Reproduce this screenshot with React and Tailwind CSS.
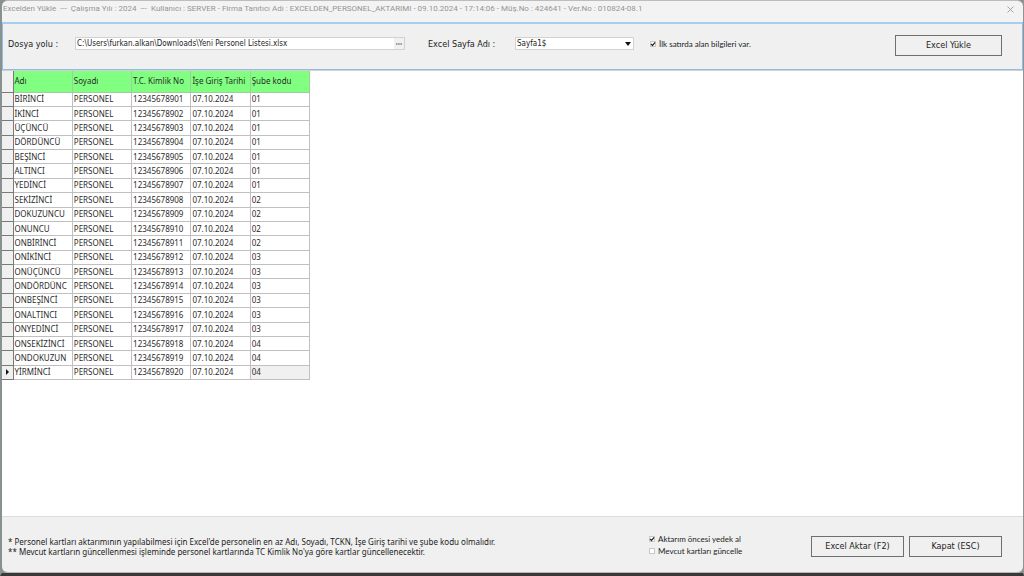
import React, { useState } from "react";

const columns = ["Adı", "Soyadı", "T.C. Kimlik No", "İşe Giriş Tarihi", "Şube kodu"];

const people = [
  ["BİRİNCİ", "01"],
  ["İKİNCİ", "01"],
  ["ÜÇÜNCÜ", "01"],
  ["DÖRDÜNCÜ", "01"],
  ["BEŞİNCİ", "01"],
  ["ALTINCI", "01"],
  ["YEDİNCİ", "01"],
  ["SEKİZİNCİ", "02"],
  ["DOKUZUNCU", "02"],
  ["ONUNCU", "02"],
  ["ONBİRİNCİ", "02"],
  ["ONİKİNCİ", "03"],
  ["ONÜÇÜNCÜ", "03"],
  ["ONDÖRDÜNC", "03"],
  ["ONBEŞİNCİ", "03"],
  ["ONALTINCI", "03"],
  ["ONYEDİNCİ", "03"],
  ["ONSEKİZİNCİ", "04"],
  ["ONDOKUZUN", "04"],
  ["YİRMİNCİ", "04"],
];

const rows = people.map(([name, branch], i) => [
  name,
  "PERSONEL",
  String(12345678901 + i),
  "07.10.2024",
  branch,
]);

const CheckBox = ({ id, label, checked, onChange }) => (
  <div className="flex items-center gap-[3px]">
    <span className="relative flex">
      <input
        id={id}
        type="checkbox"
        checked={checked}
        onChange={(e) => onChange(e.target.checked)}
        className="size-[6px] appearance-none border border-[#c8c8c8] bg-white"
      />
      {checked && (
        <svg
          viewBox="0 0 8 8"
          className="pointer-events-none absolute inset-0 size-[6px]"
          fill="none"
          stroke="#222"
          strokeWidth="1.6"
        >
          <path d="M1.4 3.8 L3.3 6 L6.8 1.8" />
        </svg>
      )}
    </span>
    <label
      htmlFor={id}
      className="font-['Lato',sans-serif] text-[8px] leading-3 whitespace-nowrap"
    >
      {label}
    </label>
  </div>
);

const Button = ({ className, children }) => (
  <button
    type="button"
    className={`h-[21px] border border-[#6f6f6f] bg-[#f0f0f0] text-[9px] leading-3 hover:bg-[#e5f1fb] ${className}`}
  >
    {children}
  </button>
);

const TitleBar = () => (
  <header className="flex h-[22px] items-center justify-between rounded-t-md border-t border-[#bdbdbd] bg-[#f3f3f3] pr-[9px] pb-[5px] pl-px text-[8px] text-[#959595]">
    <h1 className="font-['Roboto',sans-serif] whitespace-pre">
      {
        "Excelden Yükle  ---  Çalışma Yılı : 2024  ---  Kullanıcı : SERVER - Firma Tanıtıcı Adı : EXCELDEN_PERSONEL_AKTARIMI - 09.10.2024 - 17:14:06 - Müş.No : 424641 - Ver.No : 010824-08.1"
      }
    </h1>
    <button type="button" aria-label="Kapat">
      <svg viewBox="0 0 7 7" className="size-[7px]" stroke="#9b9b9b" strokeWidth="0.9">
        <path d="M0.5 0.5 L6.5 6.5 M6.5 0.5 L0.5 6.5" />
      </svg>
    </button>
  </header>
);

const FilePanel = () => {
  const [path, setPath] = useState(
    "C:\\Users\\furkan.alkan\\Downloads\\Yeni Personel Listesi.xlsx"
  );
  const [hasHeader, setHasHeader] = useState(true);

  return (
    <section className="flex h-[48px] items-center border border-t-2 border-[#93bde0] border-t-[#a9cdec] bg-[#f0f0f0] pr-5 pb-[3px] pl-[5px]">
      <label htmlFor="path" className="w-[67px] text-[9px]">
        Dosya yolu :
      </label>
      <div className="mb-[3px] flex h-[13px] w-[330px] border border-[#d2d2d2] bg-white">
        <input
          id="path"
          value={path}
          onChange={(e) => setPath(e.target.value)}
          className="min-w-0 flex-1 pl-px text-[8px] leading-[11px] outline-none"
        />
        <button
          type="button"
          aria-label="Dosya seç"
          className="flex w-[10px] items-center justify-center bg-[#f0f0f0]"
        >
          <svg viewBox="0 0 6 2" className="h-[2px] w-[6px]" fill="#444">
            <path d="M0 0.4h1.5v1.2H0z M2.2 0.4h1.5v1.2H2.2z M4.4 0.4h1.5v1.2H4.4z" />
          </svg>
        </button>
      </div>
      <label htmlFor="sheet" className="ml-[23px] w-[87px] text-[9px]">
        Excel Sayfa Adı :
      </label>
      <div className="relative mb-[3px] flex h-[13px] w-[119px] border border-[#d2d2d2] bg-white">
        <select
          id="sheet"
          className="w-full appearance-none pl-px text-[8px] leading-[11px] outline-none"
        >
          <option>Sayfa1$</option>
        </select>
        <svg
          viewBox="0 0 6 4"
          className="pointer-events-none absolute top-[4px] right-[2px] h-[4px] w-[6px]"
        >
          <path d="M0 0h6L3 4z" fill="#111" />
        </svg>
      </div>
      <div className="mb-[3px] ml-4">
        <CheckBox
          id="hasHeader"
          label="İlk satırda alan bilgileri var."
          checked={hasHeader}
          onChange={setHasHeader}
        />
      </div>
      <Button className="ml-auto w-[107px]">Excel Yükle</Button>
    </section>
  );
};

const PersonTable = () => (
  <table className="h-[309px] w-[308px] table-fixed border-collapse font-['Noto_Sans',sans-serif] text-[8px] leading-[12px] text-[#2b2b2b]">
    <colgroup>
      <col className="w-[11px]" />
      <col span={5} />
    </colgroup>
    <thead>
      <tr className="h-[21px]">
        <td className="border-r border-b border-[#7a7a7a] bg-[#f0f0f0]" />
        {columns.map((title) => (
          <th
            key={title}
            className="overflow-hidden border-r border-b border-[#9ccf9c] bg-[#80ff80] pl-px text-left font-normal whitespace-nowrap"
          >
            {title}
          </th>
        ))}
      </tr>
    </thead>
    <tbody>
      {rows.map((row, i) => {
        const current = i === rows.length - 1;
        return (
          <tr key={row[2]}>
            <td className="border-r border-b border-[#7a7a7a] bg-[#f0f0f0]">
              {current && (
                <svg viewBox="0 0 3 6" className="mx-auto h-[6px] w-[3px]">
                  <path d="M0 0v6L3 3z" fill="#111" />
                </svg>
              )}
            </td>
            {row.map((value, j) => (
              <td
                key={j}
                className={`overflow-hidden border-r border-b border-[#c0c0c0] pl-px whitespace-nowrap ${
                  current && j === 4 ? "bg-[#f0f0f0]" : ""
                }`}
              >
                {value}
              </td>
            ))}
          </tr>
        );
      })}
    </tbody>
  </table>
);

const Footer = () => {
  const [backup, setBackup] = useState(true);
  const [update, setUpdate] = useState(false);

  return (
    <footer className="flex h-[57px] items-center rounded-b-md border-t border-b border-t-[#dcdcdc] border-b-[#b5b5b5] bg-[#f0f0f0] pr-[21px] pl-[6px]">
      <div className="pt-1 font-['Noto_Sans',sans-serif] text-[8px] leading-[10px] whitespace-nowrap">
        <p>
          * Personel kartları aktarımının yapılabilmesi için Excel'de personelin en az Adı,
          Soyadı, TCKN, İşe Giriş tarihi ve şube kodu olmalıdır.
        </p>
        <p>
          ** Mevcut kartların güncellenmesi işleminde personel kartlarında TC Kimlik No'ya göre
          kartlar güncellenecektir.
        </p>
      </div>
      <div className="ml-auto w-[162px]">
        <CheckBox
          id="backup"
          label="Aktarım öncesi yedek al"
          checked={backup}
          onChange={setBackup}
        />
        <CheckBox
          id="update"
          label="Mevcut kartları güncelle"
          checked={update}
          onChange={setUpdate}
        />
      </div>
      <Button className="mt-[3px] mr-[5px] w-[93px]">Excel Aktar (F2)</Button>
      <Button className="mt-[3px] w-[93px]">Kapat (ESC)</Button>
    </footer>
  );
};

const App = () => {
  return (
    <div className="flex min-h-screen flex-col border-r border-b-3 border-l-2 border-r-[#8f9494] border-b-[#3a363a] border-l-[#87918f] bg-[#87918f] font-['DejaVu_Sans_Condensed','DejaVu_Sans',sans-serif] text-[#1c1c1c]">
      <TitleBar />
      <FilePanel />
      <main className="flex-1 border-t border-[#d0d0d0] bg-white">
        <PersonTable />
      </main>
      <Footer />
    </div>
  );
};

export default App;
